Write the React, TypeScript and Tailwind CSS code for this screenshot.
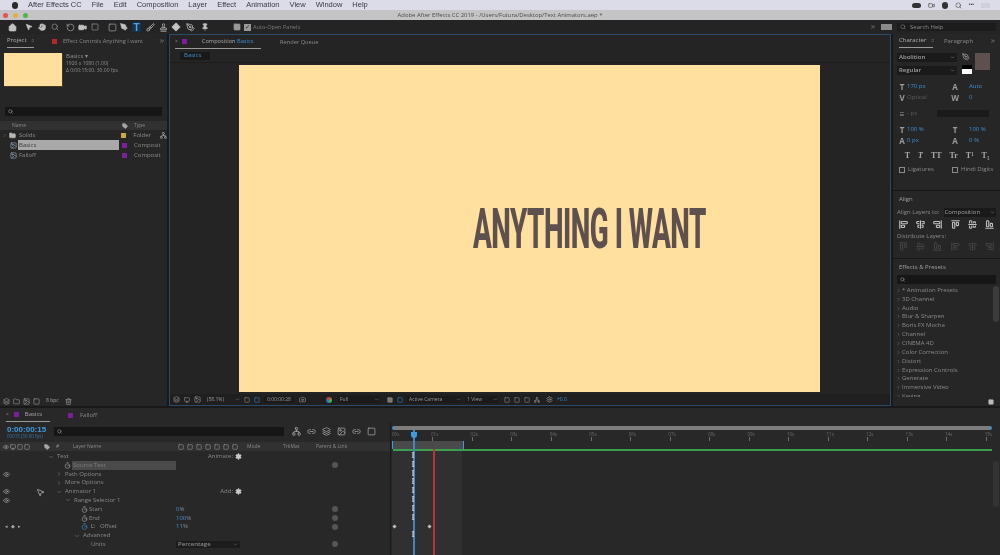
import {
  AlignCenterHorizontal,
  AlignCenterVertical,
  AlignEndHorizontal,
  AlignEndVertical,
  AlignStartHorizontal,
  AlignStartVertical,
  Brush,
  Camera,
  ChevronDown,
  ChevronRight,
  ChevronsRight,
  Eye,
  Folder,
  Hand,
  Home,
  Image,
  Layers,
  Link2,
  Monitor,
  MousePointer2,
  Network,
  PenTool,
  Pin,
  RotateCcw,
  Search,
  Settings,
  Square,
  Stamp,
  Tag,
  Timer,
  Trash2,
  Video,
} from "lucide-react";

const menuItems = ["File", "Edit", "Composition", "Layer", "Effect", "Animation", "View", "Window", "Help"];
const effects = [
  "* Animation Presets",
  "3D Channel",
  "Audio",
  "Blur & Sharpen",
  "Boris FX Mocha",
  "Channel",
  "CINEMA 4D",
  "Color Correction",
  "Distort",
  "Expression Controls",
  "Generate",
  "Immersive Video",
  "Keying",
];
const seconds = ["01s", "02s", "03s", "04s", "05s", "06s", "07s", "08s", "09s", "10s", "11s", "12s", "13s", "14s", "15s"];
const layerRows = [
  { name: "Text", pad: "pl-[48px]", arrow: "down", eye: false, right: "Animate:" },
  { name: "Source Text", pad: "pl-[64px]", watch: true, highlight: true, link: true },
  { name: "Path Options", pad: "pl-[56px]", arrow: "right", eye: true },
  { name: "More Options", pad: "pl-[56px]", arrow: "right" },
  { name: "Animator 1", pad: "pl-[56px]", arrow: "down", eye: true, right: "Add:" },
  { name: "Range Selector 1", pad: "pl-[65px]", arrow: "down", eye: true },
  { name: "Start", pad: "pl-[81px]", watch: true, value: "0", link: true },
  { name: "End", pad: "pl-[81px]", watch: true, value: "100", link: true },
  { name: "Offset", pad: "pl-[81px]", watch: true, active: true, value: "11", link: true, nav: true },
  { name: "Advanced", pad: "pl-[74px]", arrow: "down" },
  { name: "Units", pad: "pl-[91px]", select: "Percentage", link: true },
];

function Field({ label, value, muted, className }: { label: string; value: string; muted?: boolean; className: string }) {
  return (
    <div className={`flex items-center ${className}`}>
      <span className="w-[10px] text-center text-[8px] leading-none font-bold text-[#9a9a9a]">{label}</span>
      <span className={muted ? "text-[#5c5c5c]" : "text-[#3f8fd0]"}>{value}</span>
    </div>
  );
}

function ProjectPanel() {
  return (
    <div className="flex h-full w-[167px] flex-col bg-[#262626] text-[6px] text-[#8a8a8a]">
      <div className="flex h-[14px] items-center pl-[7px]">
        <div className="flex h-full w-[27px] items-center gap-[5px] border-b border-[#9a9a9a] text-[#b0b0b0]">
          Project <span className="text-[5px] text-[#666]">≡</span>
        </div>
        <span className="ml-[18px] h-[5px] w-[5px] bg-[#b3262a]" />
        <span className="ml-[6px] text-[5.6px]">Effect Controls Anything I want</span>
        <ChevronsRight size={6} className="ml-auto mr-[2px] text-[#a8a8a8]" />
      </div>
      <div className="flex gap-[4px] pt-[5px] pl-[4px]">
        <div className="h-[33px] w-[58px] bg-[#ffdf9e] shadow-[1px_1px_0_#4a3a1a]" />
        <div className="text-[5px] leading-[7px] text-[#8f8f8f]">
          <div className="text-[6px]">Basics ▾</div>
          <div>1920 x 1080 (1.00)</div>
          <div>Δ 0:00:15:00, 30.00 fps</div>
        </div>
      </div>
      <div className="mx-[5px] mt-[21px] flex h-[9px] items-center bg-[#161616] pl-[3px]">
        <Search size={5} strokeWidth={3} />
      </div>
      <div className="mt-[5px] flex h-[9px] items-center bg-[#313131] pl-[12px] text-[5px]">
        <span className="w-[110px]">Name</span>
        <Tag size={6} fill="#a8a8a8" className="text-[#a8a8a8]" />
        <span className="ml-[6px]">Type</span>
      </div>
      <div className="flex h-[10px] items-center">
        <ChevronRight size={5} className="ml-[2px]" />
        <Folder size={7} fill="#b8b8b8" className="ml-[2px] text-[#b8b8b8]" />
        <span className="ml-[3px] w-[103px]">Solids</span>
        <span className="h-[5px] w-[5px] bg-[#c9a84a]" />
        <span className="ml-[7px]">Folder</span>
        <Network size={7} className="ml-[9px] text-[#b0b0b0]" />
      </div>
      <div className="flex h-[10px] items-center">
        <Image size={7} className="ml-[10px] text-[#9db4c8]" />
        <span className="ml-[1px] flex h-full w-[101px] items-center bg-[#a9a9a9] pl-[1px] text-[#3a3a3a]">Basics</span>
        <span className="ml-[3px] h-[5px] w-[5px] bg-[#7b1f9a]" />
        <span className="ml-[7px]">Composit</span>
      </div>
      <div className="flex h-[10px] items-center">
        <Image size={7} className="ml-[10px] text-[#9db4c8]" />
        <span className="ml-[2px] w-[103px]">Falloff</span>
        <span className="h-[5px] w-[5px] bg-[#7b1f9a]" />
        <span className="ml-[7px]">Composit</span>
      </div>
      <div className="flex-1" />
      <div className="flex h-[10px] items-center gap-[3px] pl-[3px] text-[#a0a0a0]">
        <Layers size={7} />
        <Folder size={7} />
        <Image size={7} />
        <Square size={7} />
        <span className="mx-[3px] text-[5px]">8 bpc</span>
        <Trash2 size={7} />
      </div>
    </div>
  );
}

function CompPanel() {
  return (
    <div className="flex h-full w-[722px] flex-col border border-[#2b4c68] bg-[#242424] text-[6px] text-[#8a8a8a]">
      <div className="flex h-[14px] items-center pl-[5px]">
        <div className="flex h-full w-[86px] items-center border-b border-[#9a9a9a]">
          <span className="text-[5px]">×</span>
          <span className="ml-[4px] h-[5px] w-[5px] bg-[#7b1f9a]" />
          <span className="ml-[15px] text-[5.7px] text-[#a8a8a8]">
            Composition <span className="text-[#3f8fd0]">Basics</span>
          </span>
        </div>
        <span className="ml-[19px] text-[5.7px]">Render Queue</span>
      </div>
      <div className="flex h-[14px] items-center border-b border-[#1c1c1c] pl-[10px]">
        <span className="flex h-[8px] w-[30px] items-center bg-[#191919] pl-[4px] text-[#3f8fd0]">Basics</span>
      </div>
      <div className="flex flex-1 justify-center pt-[2px] pr-[2px]">
        <div className="flex h-[327px] w-[581px] bg-[#ffe09f] pt-[136px] pl-[234px]">
          <span className="origin-left scale-x-[0.496] font-['Roboto',sans-serif] text-[56px] leading-[56px] font-extrabold tracking-[-1px] whitespace-nowrap text-[#5f5050]">
            ANYTHING I WANT
          </span>
        </div>
      </div>
      <div className="flex h-[11px] items-center gap-[4px] bg-[#1f1f1f] pl-[3px] text-[5px] text-[#9a9a9a]">
        <Layers size={7} />
        <Monitor size={6} />
        <Image size={7} />
        <span className="ml-[2px] w-[24px]">(58.1%)</span>
        <ChevronDown size={5} />
        <Square size={6} />
        <Square size={6} className="text-[#3f8fd0]" />
        <span className="w-[30px] bg-[#1a1a1a] text-center">0:00:00:28</span>
        <Camera size={7} className="ml-[1px]" />
        <span className="ml-[16px] h-[6px] w-[6px] rounded-full bg-[conic-gradient(#d33,#3c3,#36d,#d33)]" />
        <span className="ml-[2px] flex w-[41px] items-center justify-between bg-[#1a1a1a] pl-[2px]">
          Full <ChevronDown size={5} />
        </span>
        <Square size={6} fill="#777" className="ml-[4px]" />
        <Square size={6} className="text-[#3f8fd0]" />
        <span className="flex w-[54px] items-center justify-between bg-[#1a1a1a] pl-[2px]">
          Active Camera <ChevronDown size={5} />
        </span>
        <span className="flex w-[33px] items-center justify-between bg-[#1a1a1a] pl-[2px]">
          1 View <ChevronDown size={5} />
        </span>
        <Square size={6} className="ml-[2px]" />
        <Square size={6} />
        <Square size={6} />
        <Network size={6} />
        <Settings size={7} className="ml-[2px]" />
        <span className="text-[#3f8fd0]">+0.0</span>
      </div>
    </div>
  );
}

function CharacterPanel() {
  return (
    <div className="flex h-[156px] flex-col bg-[#262626] px-[4px] text-[6px] text-[#8a8a8a]">
      <div className="flex h-[14px] items-center pl-[2px]">
        <div className="flex h-full w-[34px] items-center gap-[5px] border-b border-[#9a9a9a] text-[#b0b0b0]">
          Character <span className="text-[5px] text-[#666]">≡</span>
        </div>
        <span className="ml-[11px]">Paragraph</span>
        <ChevronsRight size={6} className="ml-auto text-[#a8a8a8]" />
      </div>
      <div className="flex gap-[5px] pt-[5px]">
        <div className="flex w-[60px] flex-col gap-[4px]">
          <div className="flex h-[9px] items-center justify-between bg-[#1a1a1a] px-[2px] font-semibold text-[#a0a0a0]">
            Abolition <ChevronDown size={5} />
          </div>
          <div className="flex h-[9px] items-center justify-between bg-[#1a1a1a] px-[2px] font-semibold text-[#a0a0a0]">
            Regular <ChevronDown size={5} />
          </div>
        </div>
        <div className="flex w-[30px] gap-[3px]">
          <div className="flex flex-col justify-between pb-[1px]">
            <PenTool size={8} className="text-[#a0a0a0]" />
            <div className="h-[9px] w-[10px] border-t-[4px] border-black bg-white" />
          </div>
          <div className="h-[17px] w-[15px] bg-[#5f5050]" />
        </div>
      </div>
      <div className="mt-[6px] flex h-[11px] items-center">
        <Field label="T" value="170 px" className="w-[53px]" />
        <Field label="A" value="Auto" className="w-[40px] gap-[9px]" />
      </div>
      <div className="flex h-[11px] items-center">
        <Field label="V" value="Optical" muted className="w-[53px]" />
        <Field label="W" value="0" className="w-[40px] gap-[9px]" />
      </div>
      <div className="mt-[5px] flex h-[11px] items-center">
        <Field label="≡" value="- px" muted className="w-[40px]" />
        <div className="h-[7px] w-[52px] bg-[#1a1a1a]" />
      </div>
      <div className="mt-[5px] flex h-[11px] items-center">
        <Field label="T" value="100 %" className="w-[53px]" />
        <Field label="T" value="100 %" className="w-[40px] gap-[9px]" />
      </div>
      <div className="flex h-[11px] items-center">
        <Field label="A" value="0 px" className="w-[53px]" />
        <Field label="A" value="0 %" className="w-[40px] gap-[9px]" />
      </div>
      <div className="mt-[5px] flex justify-center gap-[8px] pl-[1px] font-['Liberation_Serif',serif] text-[8px] leading-[10px] font-bold text-[#a8a8a8]">
        <span>T</span>
        <span className="italic">T</span>
        <span>TT</span>
        <span>Tr</span>
        <span>T¹</span>
        <span>T₁</span>
      </div>
      <div className="mt-[4px] flex items-center gap-[2px] pl-[2px]">
        <span className="h-[6px] w-[6px] border border-[#8a8a8a]" />
        <span className="w-[43px] pl-[1px]">Ligatures</span>
        <span className="h-[6px] w-[6px] border border-[#8a8a8a]" />
        <span className="pl-[1px]">Hindi Digits</span>
      </div>
    </div>
  );
}

function AlignPanel() {
  return (
    <div className="flex h-[68px] flex-col border-t border-[#171717] bg-[#262626] px-[4px] text-[6px] text-[#8a8a8a]">
      <div className="flex h-[17px] items-center pl-[2px] text-[#a0a0a0]">Align</div>
      <div className="flex h-[9px] items-center">
        <span className="w-[47px]">Align Layers to:</span>
        <span className="flex w-[53px] items-center justify-between bg-[#1a1a1a] pr-[1px] pl-[1px] text-[#a0a0a0]">
          Composition <ChevronDown size={5} />
        </span>
      </div>
      <div className="flex justify-between px-[2px] pt-[3px] text-[#c0c0c0]">
        <AlignStartVertical size={9} strokeWidth={3} />
        <AlignCenterVertical size={9} strokeWidth={3} />
        <AlignEndVertical size={9} strokeWidth={3} />
        <AlignStartHorizontal size={9} strokeWidth={3} />
        <AlignCenterHorizontal size={9} strokeWidth={3} />
        <AlignEndHorizontal size={9} strokeWidth={3} />
      </div>
      <div className="pt-[3px] leading-[9px]">Distribute Layers:</div>
      <div className="flex justify-between px-[2px] pt-[1px] text-[#4e4e4e]">
        <AlignStartHorizontal size={9} />
        <AlignCenterHorizontal size={9} />
        <AlignEndHorizontal size={9} />
        <AlignStartVertical size={9} />
        <AlignCenterVertical size={9} />
        <AlignEndVertical size={9} />
      </div>
    </div>
  );
}

function EffectsPanel() {
  return (
    <div className="flex min-h-0 flex-1 flex-col border-t border-[#171717] bg-[#262626] text-[6px] text-[#8a8a8a]">
      <div className="flex h-[16px] items-center pl-[6px] text-[#a0a0a0]">Effects &amp; Presets</div>
      <div className="mx-[4px] flex h-[9px] items-center bg-[#161616] pl-[3px]">
        <Search size={5} strokeWidth={3} />
      </div>
      <div className="mt-[2px] flex h-[111px] overflow-hidden">
        <div className="flex-1 pl-[3px]">
          {effects.map((effect) => (
            <div key={effect} className="flex h-[8.85px] items-center gap-[1px]">
              <ChevronRight size={5} />
              <span>{effect}</span>
            </div>
          ))}
        </div>
        <div className="w-[7px]">
          <div className="h-[36px] w-[6px] rounded-full bg-[#3c3c3c]" />
        </div>
      </div>
      <div className="flex flex-1 items-center justify-end pr-[6px]">
        <Square size={6} fill="#bbb" className="text-[#bbb]" />
      </div>
    </div>
  );
}

function LayerRow({ row }: { row: (typeof layerRows)[number] }) {
  return (
    <div className="grid h-[8.8px] grid-cols-[176px_67px_85px_14px] items-center text-[6px] text-[#8a8a8a]">
      <div className={`relative flex h-full items-center gap-[1px] ${row.pad}`}>
        {row.eye && <Eye size={7} className="absolute left-[3px] text-[#a8a8a8]" />}
        {row.nav && (
          <span className="absolute left-[5px] text-[5px] tracking-[3px] text-[#a8a8a8]">◂◆▸</span>
        )}
        {row.arrow === "down" && <ChevronDown size={6} className="mr-[2px]" />}
        {row.arrow === "right" && <ChevronRight size={6} className="mr-[2px]" />}
        {row.watch && <Timer size={7} className={row.active ? "text-[#3f8fd0]" : "text-[#a8a8a8]"} />}
        {row.active && <span className="ml-[2px] mr-[4px] text-[5px] text-[#a8a8a8]">Ľ:</span>}
        <span className={row.highlight ? "flex h-full flex-1 items-center bg-[#4a4a4a] pl-[1px] text-[#7d7d7d]" : ""}>
          {row.name}
        </span>
      </div>
      <div className="flex items-center">
        {row.value && (
          <span>
            <span className="text-[#3f8fd0]">{row.value}</span>%
          </span>
        )}
        {row.select && (
          <span className="flex h-[7px] w-[64px] items-center justify-between bg-[#1c1c1c] pr-[2px] pl-[2px] font-semibold">
            {row.select} <ChevronDown size={5} />
          </span>
        )}
        {row.right && (
          <span className="flex w-full items-center justify-end gap-[2px] pr-[1px]">
            {row.right}
            <Settings size={7} fill="#c8c8c8" className="text-[#c8c8c8]" />
          </span>
        )}
      </div>
      <div />
      <div className="flex justify-center">
        {row.link && <span className="h-[6px] w-[6px] rounded-full bg-[#555]" />}
      </div>
    </div>
  );
}

function Timeline() {
  return (
    <div className="flex min-h-0 flex-1 flex-col bg-[#282828] text-[6px] text-[#8a8a8a]">
      <div className="flex h-[14px] items-center pl-[6px]">
        <div className="flex h-full w-[44px] items-center border-b border-[#9a9a9a]">
          <span className="text-[5px]">×</span>
          <span className="ml-[5px] h-[5px] w-[5px] bg-[#7b1f9a]" />
          <span className="ml-[6px] text-[#a8a8a8]">Basics</span>
        </div>
        <span className="ml-[18px] h-[5px] w-[5px] bg-[#7b1f9a]" />
        <span className="ml-[7px]">Falloff</span>
      </div>
      <div className="flex min-h-0 flex-1">
        <div className="flex w-[390px] flex-col">
          <div className="flex h-[20px] items-start pt-[3px] pl-[7px]">
            <div className="w-[47px]">
              <div className="font-['Liberation_Sans',sans-serif] text-[8px] leading-[9px] font-bold text-[#3f9be0]">0:00:00:15</div>
              <div className="text-[4.5px] leading-[5px] text-[#3577ab]">00015 (30.00 fps)</div>
            </div>
            <div className="mt-[2px] flex h-[9px] w-[230px] items-center bg-[#161616] pl-[3px]">
              <Search size={5} strokeWidth={3} />
            </div>
            <div className="mt-[2px] ml-[8px] flex gap-[6px] text-[#a8a8a8]">
              <Network size={9} />
              <Link2 size={9} />
              <Layers size={9} />
              <Image size={9} />
              <Link2 size={9} />
              <Square size={9} />
            </div>
          </div>
          <div className="grid h-[9px] grid-cols-[44px_29px_105px_69px_36px_33px_1fr] items-center bg-[#313131] text-[5px]">
            <div className="flex items-center gap-[1px] pl-[3px] text-[#a8a8a8]">
              <Eye size={6} />
              <Monitor size={6} />
              <Square size={6} />
              <Square size={6} />
            </div>
            <div className="flex items-center gap-[6px]">
              <Tag size={6} fill="#a8a8a8" className="text-[#a8a8a8]" />
              <span>#</span>
            </div>
            <span>Layer Name</span>
            <div className="flex gap-[3px] text-[#a8a8a8]">
              <Square size={6} />
              <Square size={6} />
              <Square size={6} />
              <Square size={6} />
              <Square size={6} />
              <Square size={6} />
              <Square size={6} />
            </div>
            <span>Mode</span>
            <span>TrkMat</span>
            <span>Parent &amp; Link</span>
          </div>
          <div className="relative flex-1 overflow-hidden pt-[1px]">
            {layerRows.map((row) => (
              <LayerRow key={row.name} row={row} />
            ))}
            <MousePointer2 size={9} fill="#222" className="absolute top-[37px] left-[36px] text-[#c0c0c0]" />
          </div>
        </div>
        <div className="relative flex-1 overflow-hidden border-l border-[#181818] pl-[1px]">
          <div className="mt-[4px] mr-[8px] h-[4px] rounded-full border-x-2 border-[#3f8fd0] bg-[#7d7d7d]" />
          <div className="relative mr-[8px] flex h-[11px] justify-end">
            <span className="absolute top-[1px] left-0 text-[4.5px] leading-[6px] text-[#6c6c6c]">00s</span>
            {seconds.map((s) => (
              <div key={s} className="flex w-[39.55px] flex-col items-end pt-[1px] text-[4.5px] leading-[6px] text-[#6c6c6c]">
                {s}
                <span className="mr-[5px] h-[4px] w-px bg-[#6c6c6c]" />
              </div>
            ))}
          </div>
          <div className="h-[8px] w-[72px] border-x border-[#3f9be0] bg-[#4a4a4a]" />
          <div className="mr-[8px] ml-[1px] h-[2px] bg-[#3aa04f]" />
          <div className="h-full w-[70px] bg-[#303030]" />
          <div className="absolute top-[8px] bottom-0 left-[22px] w-[1.5px] bg-[#3f86c4]" />
          <div className="absolute top-[10px] left-[19.5px] h-[6px] w-[6px] rounded-b-full bg-[#3f9be0]" />
          <div className="absolute top-[27px] bottom-0 left-[42px] w-[1.5px] bg-[#c0303a]" />
          <div className="absolute top-[102.5px] left-[2px] h-[3px] w-[3px] rotate-45 bg-[#c0c0c0]" />
          <div className="absolute top-[102.5px] left-[37px] h-[3px] w-[3px] rotate-45 bg-[#c0c0c0]" />
          <div className="absolute top-[30px] left-[20.5px] flex flex-col font-['Liberation_Serif',serif] text-[8px] leading-[8.8px] font-bold text-[#c0ccd6]">
            {[0, 1, 2, 3, 4, 5, 6, 7].map((n) => (
              <span key={n}>I</span>
            ))}
            <span>&nbsp;</span>
            <span>I</span>
          </div>
          <div className="absolute top-[39px] right-[1px] h-[46px] w-[6px] rounded-full bg-[#333]" />
        </div>
      </div>
    </div>
  );
}

export default function App() {
  return (
    <div className="flex h-[555px] w-[1000px] flex-col overflow-hidden bg-[#191919] font-['Open_Sans',sans-serif] blur-[0.3px]">
      <div className="flex h-[10px] items-center bg-[#dcdce9] pl-[12px] font-['Liberation_Sans',sans-serif] text-[7.5px] text-[#3a3a44]">
        <span className="mr-[10px] h-[7px] w-[6px] rounded-full bg-[#2a2a2a]" />
        <span className="mr-[10px] font-medium">After Effects CC</span>
        <div className="flex gap-[10px]">
          {menuItems.map((item) => (
            <span key={item}>{item}</span>
          ))}
        </div>
        <div className="ml-auto flex items-center gap-[7px] pr-[10px] text-[#444]">
          <span className="h-[5px] w-[9px] rounded-full bg-[#333]" />
          <Video size={7} />
          <span className="h-[7px] w-[6px] rounded-sm bg-[#333]" />
          <Search size={7} />
          <span className="text-[5px]">•••</span>
          <span className="h-[5px] w-[9px] bg-[#d0d0da]" />
        </div>
      </div>
      <div className="relative flex h-[10px] items-center justify-center bg-[#c4c4c6] text-[5.9px] text-[#4a4a4a]">
        <div className="absolute left-[3px] flex gap-[5px]">
          <span className="h-[5px] w-[5px] rounded-full bg-[#e2544c]" />
          <span className="h-[5px] w-[5px] rounded-full bg-[#e0b040]" />
          <span className="h-[5px] w-[5px] rounded-full bg-[#4cb648]" />
        </div>
        Adobe After Effects CC 2019 - /Users/Futura/Desktop/Text Animators.aep *
      </div>
      <div className="flex h-[14px] items-center bg-[#242424] pl-[8px] text-[#c2c2c2]">
        <Home size={9} fill="#c2c2c2" />
        <MousePointer2 size={8} fill="#c2c2c2" className="ml-[8px]" />
        <Hand size={8} fill="#c2c2c2" className="ml-[5px]" />
        <Search size={8} className="ml-[5px] text-[#999]" />
        <RotateCcw size={9} className="ml-[7px] text-[#999]" />
        <Video size={9} fill="#c2c2c2" className="ml-[3px]" />
        <Square size={8} className="ml-[4px] text-[#999]" />
        <Square size={9} className="ml-[9px] text-[#999]" />
        <PenTool size={8} fill="#c2c2c2" className="ml-[3px]" />
        <span className="ml-[4px] flex h-[10px] w-[9px] items-center justify-center bg-[#16334d] font-['Liberation_Sans',sans-serif] text-[10px] font-bold text-[#4ea3e6]">
          T
        </span>
        <Brush size={9} className="ml-[5px]" />
        <Stamp size={9} className="ml-[4px]" />
        <Square size={8} fill="#c2c2c2" className="ml-[4px] rotate-45" />
        <PenTool size={9} className="ml-[6px]" />
        <Pin size={8} fill="#c2c2c2" className="ml-[6px]" />
        <Square size={8} fill="#999" className="ml-[24px] text-[#999]" />
        <span className="ml-[3px] flex h-[7px] w-[7px] items-center justify-center bg-[#999] text-[6px] text-[#222]">✓</span>
        <span className="ml-[2px] text-[5.6px] text-[#7a7a7a]">Auto-Open Panels</span>
        <div className="ml-auto flex items-center gap-[5px] pr-[4px]">
          <ChevronsRight size={6} className="text-[#a8a8a8]" />
          <span className="h-[6px] w-[11px] bg-[#8a8a8a]" />
          <div className="flex h-[8px] w-[99px] items-center gap-[4px] bg-[#1c1c1c] pl-[3px] text-[6px] text-[#8a8a8a]">
            <Search size={6} />
            Search Help
          </div>
        </div>
      </div>
      <div className="flex h-[372px] gap-[2px]">
        <ProjectPanel />
        <CompPanel />
        <div className="flex min-w-0 flex-1 flex-col">
          <CharacterPanel />
          <AlignPanel />
          <EffectsPanel />
        </div>
      </div>
      <div className="h-[2px]" />
      <Timeline />
    </div>
  );
}
